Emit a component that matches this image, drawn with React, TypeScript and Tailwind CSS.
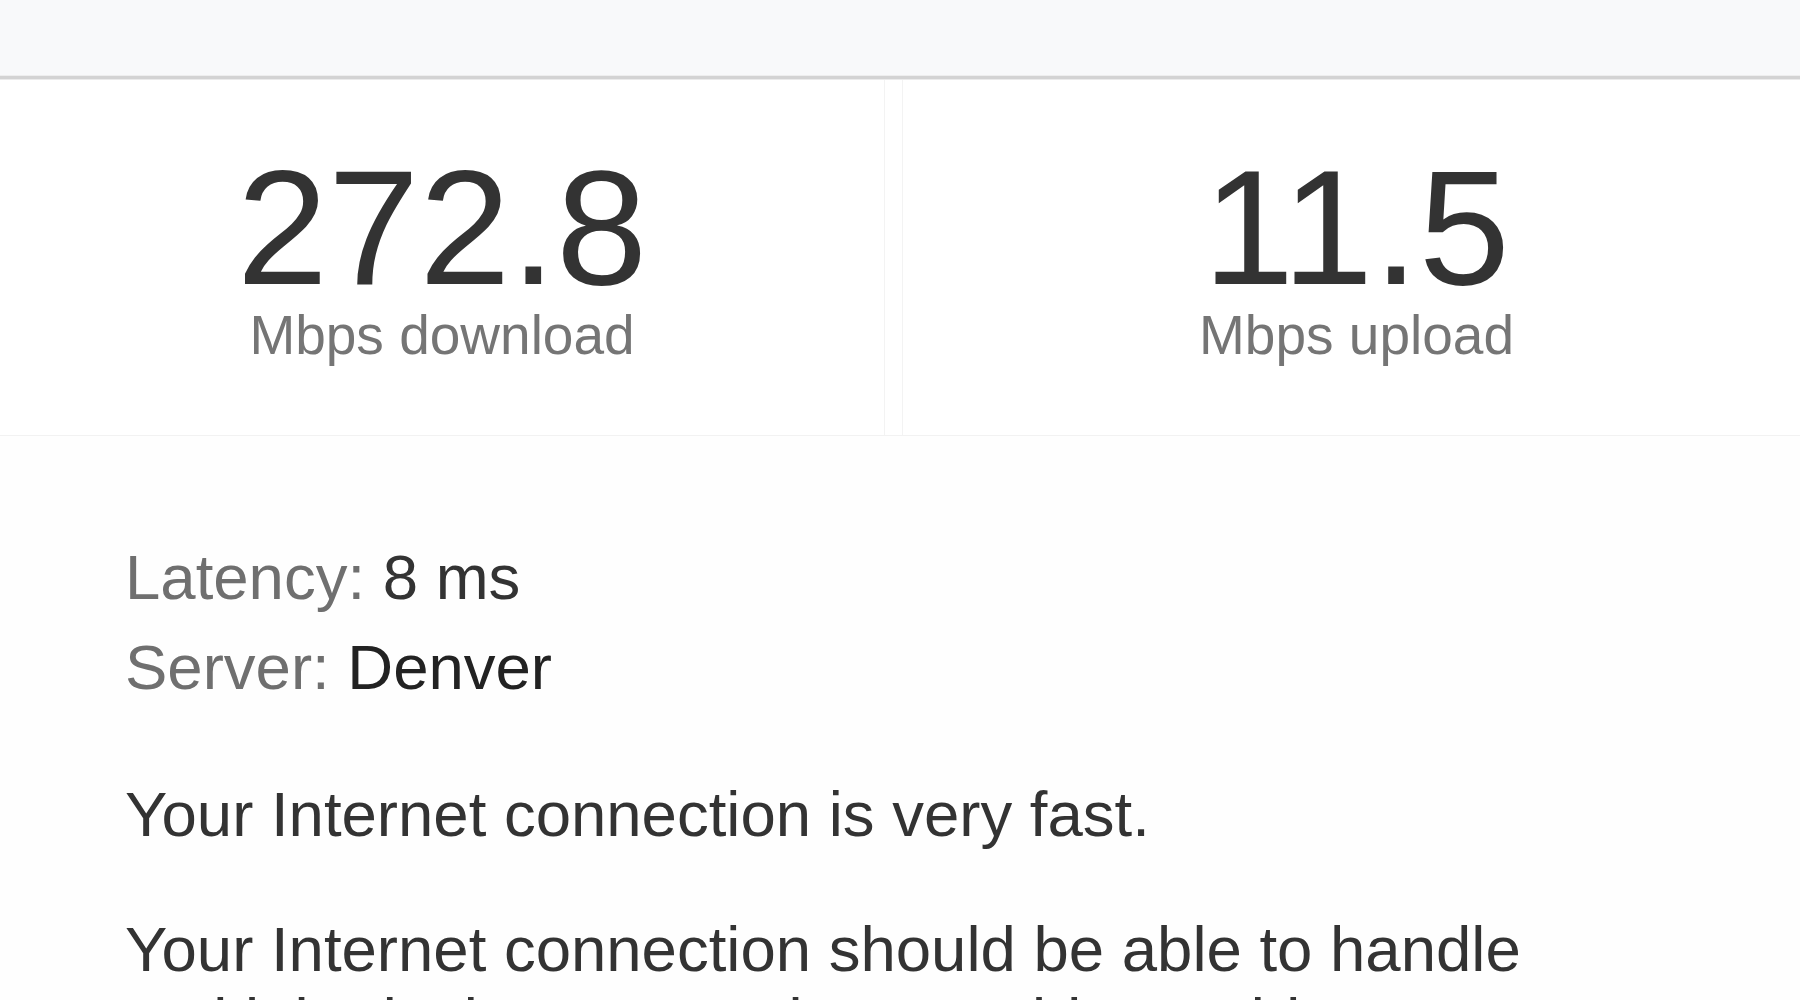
import React from 'react';

const font = { fontFamily: '"Liberation Sans", Arial, sans-serif' };

interface ResultProps {
  value: string;
  label: string;
  shift?: boolean;
}

const Result: React.FC<ResultProps> = ({ value, label, shift }) => (
  <div className={`flex h-[355px] flex-col items-center pt-[78px] ${shift ? 'pl-[10px]' : ''}`}>
    <div className="text-[164px] leading-[140px] text-[#333333]">{value}</div>
    <div className="mt-[10px] text-[55px] leading-[55px] text-[#757575]">{label}</div>
  </div>
);

export default function App() {
  return (
    <div className="h-[1000px] w-[1800px] overflow-hidden bg-white" style={font}>
      {/* barre du haut */}
      <div className="h-[75px] bg-[#f8f9fa]" />
      <div className="h-[1px] bg-[#eeeeee]" />
      <div className="h-[3px] bg-[#d3d3d3]" />
      <div className="h-[1px] bg-[#ebebeb]" />

      {/* résultats */}
      <div className="grid grid-cols-[885px_1fr] gap-[17px] border-b border-[#f2f2f2]">
        <div className="border-r border-[#f3f3f3]">
          <Result value="272.8" label="Mbps download" />
        </div>
        <div className="border-l border-[#f3f3f3]">
          <Result value="11.5" label="Mbps upload" shift />
        </div>
      </div>

      {/* détails */}
      <div className="bg-[#fefefe] pl-[125px] pt-[96px]">
        <div className="text-[63.5px] leading-[90px]">
          <div>
            <span className="text-[#6f6f6f]">Latency: </span>
            <span className="text-[#333333]">8 ms</span>
          </div>
          <div>
            <span className="text-[#6f6f6f]">Server: </span>
            <span className="text-[#222222]">Denver</span>
          </div>
        </div>
        <p className="mt-[66px] w-[1500px] text-[63.5px] leading-[72px] text-[#333333]">
          Your Internet connection is very fast.
        </p>
        <p className="mt-[63px] w-[1500px] text-[63.5px] leading-[72px] text-[#333333]">
          Your Internet connection should be able to handle multiple devices streaming HD videos,
          video conferencing, and gaming at the same time.
        </p>
      </div>
    </div>
  );
}
